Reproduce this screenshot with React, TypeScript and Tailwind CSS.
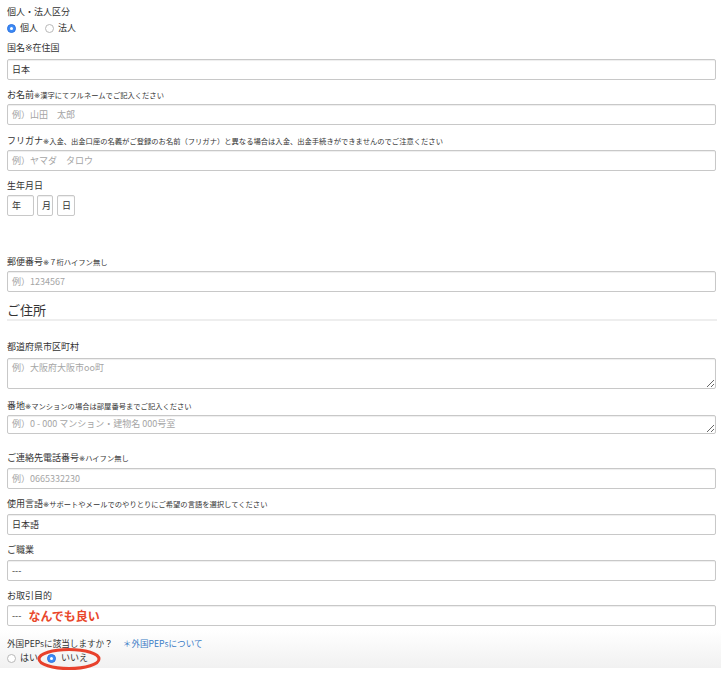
import React from "react";

function Mark() {
  return <span className="font-['DejaVu_Sans',sans-serif] text-[#333]">※</span>;
}

function Label({ main, mark = false, note, className = "" }: { main: React.ReactNode; mark?: boolean; note?: string; className?: string }) {
  return (
    <div className={`h-[12px] whitespace-nowrap text-[9px] leading-[12px] text-[#333] ${className}`}>
      {main}
      {note && (
        <span className="text-[7.3px] text-[#333]">
          <Mark />
          {note}
        </span>
      )}
    </div>
  );
}

function Box({ children, className = "", muted = false }: { children: React.ReactNode; className?: string; muted?: boolean }) {
  return (
    <div
      className={`flex h-[21px] w-[709px] items-center whitespace-nowrap rounded-[2px] border border-[#c8c8c8] bg-white pl-[4px] text-[9px] leading-[12px] shadow-[inset_0_1px_1px_rgba(0,0,0,0.07)] ${
        muted ? "text-[#a5a5a5]" : "text-[#333]"
      } ${className}`}
    >
      {children}
    </div>
  );
}

function RadioOn() {
  return (
    <span className="flex h-[9px] w-[9px] items-center justify-center rounded-full border border-[#2f74e0] bg-[#3c8af6]">
      <span className="h-[3px] w-[3px] rounded-full bg-white" />
    </span>
  );
}

function RadioOff() {
  return <span className="block h-[9px] w-[9px] rounded-full border border-[#b8b8b8] bg-white" />;
}

export default function App() {
  return (
    <div className="min-h-screen bg-white font-['Noto_Sans_CJK_JP','Noto_Sans',sans-serif] text-[#333]">
      <div className="w-[721px] pt-[6px]">
        <div className="pl-[7px]">
          <Label main="個人・法人区分" />
          <div className="mt-[4px] flex h-[12px] items-center text-[9px] leading-[12px]">
            <RadioOn />
            <span className="ml-[4px]">個人</span>
            <span className="ml-[7px]">
              <RadioOff />
            </span>
            <span className="ml-[4px]">法人</span>
          </div>

          <Label
            main={
              <>
                国名
                <Mark />
                在住国
              </>
            }
            className="mt-[8px]"
          />
          <Box className="mt-[5px]">日本</Box>

          <Label main="お名前" note="漢字にてフルネームでご記入ください" className="mt-[9px]" />
          <Box className="mt-[3px]" muted>
            例）山田　太郎
          </Box>

          <Label
            main="フリガナ"
            note="入金、出金口座の名義がご登録のお名前（フリガナ）と異なる場合は入金、出金手続きができませんのでご注意ください"
            className="mt-[10px]"
          />
          <Box className="mt-[3px]" muted>
            例）ヤマダ　タロウ
          </Box>

          <Label main="生年月日" className="mt-[9px]" />
          <div className="mt-[3px] flex h-[21px]">
            <Box className="!w-[27px]">年</Box>
            <Box className="ml-[3px] !w-[16px]">月</Box>
            <Box className="ml-[4px] !w-[18px]">日</Box>
          </div>

          <Label main="郵便番号" note="７桁ハイフン無し" className="mt-[40px]" />
          <Box className="mt-[3px]" muted>
            例）1234567
          </Box>

          <div className="mt-[9px] h-[20px] w-[710px] border-b-2 border-[#eeeeee] text-[13px] leading-[18px] text-[#333]">
            ご住所
          </div>

          <Label main="都道府県市区町村" className="mt-[20px]" />
          <textarea
            readOnly
            placeholder="例）大阪府大阪市oo町"
            className="mt-[5px] block h-[31px] w-[709px] rounded-[2px] border border-[#c8c8c8] bg-white px-[4px] pt-[3px] text-[9px] leading-[12px] text-[#333] shadow-[inset_0_1px_1px_rgba(0,0,0,0.07)] outline-none placeholder:text-[#a5a5a5]"
          />

          <Label main="番地" note="マンションの場合は部屋番号までご記入ください" className="mt-[11px]" />
          <textarea
            readOnly
            placeholder="例）0 - 000 マンション・建物名 000号室"
            className="mt-[3px] block h-[19px] w-[709px] rounded-[2px] border border-[#c8c8c8] bg-white px-[4px] pt-[2px] text-[9px] leading-[12px] text-[#333] shadow-[inset_0_1px_1px_rgba(0,0,0,0.07)] outline-none placeholder:text-[#a5a5a5]"
          />

          <Label main="ご連絡先電話番号" note="ハイフン無し" className="mt-[18px]" />
          <Box className="mt-[4px]" muted>
            例）0665332230
          </Box>

          <Label main="使用言語" note="サポートやメールでのやりとりにご希望の言語を選択してください" className="mt-[9px]" />
          <Box className="mt-[4px]">日本語</Box>

          <Label main="ご職業" className="mt-[9px]" />
          <Box className="mt-[4px]">---</Box>

          <Label main="お取引目的" className="mt-[9px]" />
          <Box className="mt-[3px]">
            <span>---</span>
            <span className="ml-[7px] text-[12px] font-bold leading-[14px] text-[#e9472b]">なんでも良い</span>
          </Box>
        </div>

        <div className="mt-[4px] bg-linear-to-b from-white to-[#f1f1f1] pb-[4px] pl-[7px] pt-[7px]">
          <div className="flex h-[12px] items-center whitespace-nowrap text-[8.6px] leading-[12px]">
            <span className="text-[#333]">外国PEPsに該当しますか？</span>
            <span className="ml-[10px] text-[#3a7cc6]">＊外国PEPsについて</span>
          </div>
          <div className="relative mt-[3px] flex h-[12px] items-center text-[9px] leading-[12px]">
            <RadioOff />
            <span className="ml-[4px]">はい</span>
            <span className="ml-[9px]">
              <RadioOn />
            </span>
            <span className="ml-[5px]">いいえ</span>
            <svg
              className="pointer-events-none absolute left-[29px] top-[-5px]"
              width="66"
              height="24"
              viewBox="0 0 66 24"
            >
              <ellipse cx="33" cy="12" rx="30" ry="9.5" fill="none" stroke="#e8412c" strokeWidth="3" />
            </svg>
          </div>
        </div>
      </div>
    </div>
  );
}
